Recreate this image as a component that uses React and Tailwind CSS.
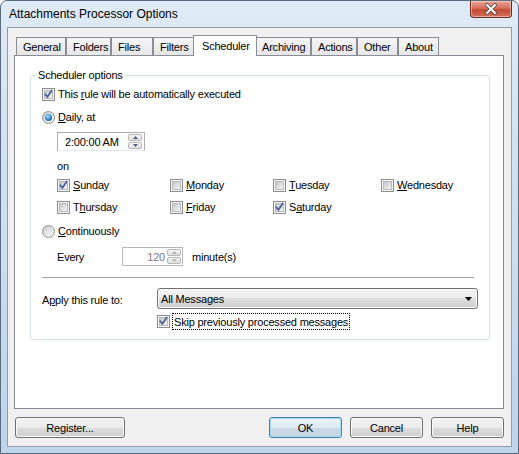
import React from 'react';

const tabs = [
  { label: 'General', w: 'w-[50px]' },
  { label: 'Folders', w: 'w-[45px]' },
  { label: 'Files', w: 'w-[42px]' },
  { label: 'Filters', w: 'w-[42px]' },
  { label: 'Scheduler', w: 'w-[64px]', active: true },
  { label: 'Archiving', w: 'w-[56px]' },
  { label: 'Actions', w: 'w-[46px]' },
  { label: 'Other', w: 'w-[41px]' },
  { label: 'About', w: 'w-[41px]' },
];

// underlined access key letter
const U = ({ children }) => <span className="underline underline-offset-[1px]">{children}</span>;

function CheckBox({ checked }) {
  return (
    <span className="relative flex h-[13px] w-[13px] shrink-0 items-center justify-center border border-[#8f8f8f] bg-[#f4f4f4]">
      <span className="h-[9px] w-[9px] border border-[#b9bbbe] bg-[linear-gradient(135deg,#c3c6ca,#dfe0e2_55%,#f4f4f4)]" />
      {checked && (
        <svg className="absolute left-[-1px] top-[-1px]" width="13" height="13" viewBox="0 0 13 13">
          <path d="M3.3 6.3 L5.4 8.8 L9.6 2.8" fill="none" stroke="#4a5f97" strokeWidth="1.7" strokeLinecap="square" />
        </svg>
      )}
    </span>
  );
}

function Radio({ checked }) {
  return (
    <span className="flex h-[13px] w-[13px] shrink-0 items-center justify-center rounded-full border border-[#8f8f8f] bg-[linear-gradient(135deg,#c4c7cb,#e6e7e8_55%,#fafafa)]">
      {checked && (
        <span className="h-[7px] w-[7px] rounded-full bg-[radial-gradient(circle_at_40%_35%,#b5e6ff,#3a92d8_45%,#0c3d78)]" />
      )}
    </span>
  );
}

function Spin({ disabled }) {
  const arrow = disabled ? '#b3b3b3' : '#4d6185';
  return (
    <span className="flex h-[15px] w-[14px] shrink-0 flex-col gap-[1px]">
      <span className="flex h-[7px] items-center justify-center rounded-[2px] border border-[#b7b7b7] bg-[linear-gradient(#f6f6f6,#dedede)]">
        <svg width="5" height="3" viewBox="0 0 5 3"><path d="M0 3 L2.5 0 L5 3Z" fill={arrow} /></svg>
      </span>
      <span className="flex h-[7px] items-center justify-center rounded-[2px] border border-[#b7b7b7] bg-[linear-gradient(#f6f6f6,#dedede)]">
        <svg width="5" height="3" viewBox="0 0 5 3"><path d="M0 0 L5 0 L2.5 3Z" fill={arrow} /></svg>
      </span>
    </span>
  );
}

function Day({ checked, children, w }) {
  return (
    <div className={`flex items-center gap-[3px] ${w}`}>
      <CheckBox checked={checked} />
      <span>{children}</span>
    </div>
  );
}

function CloseButton() {
  return (
    <div className="mr-[6px] flex h-[17px] w-[42px] items-center justify-center rounded-b-[4px] border border-t-0 border-[#6b2a20] bg-[linear-gradient(#e9a597,#d8705b_45%,#c24a31_55%,#d0735d)] shadow-[inset_0_0_0_1px_rgba(255,220,210,0.55)]">
      <svg width="14" height="12" viewBox="0 0 14 12">
        <path d="M3 2 L11 10 M11 2 L3 10" stroke="#4a4a4a" strokeWidth="3.6" strokeLinecap="round" />
        <path d="M3 2 L11 10 M11 2 L3 10" stroke="#ffffff" strokeWidth="2" strokeLinecap="round" />
      </svg>
    </div>
  );
}

const btn =
  'flex h-[21px] w-[73px] items-center justify-center rounded-[3px] border border-[#707070] bg-[linear-gradient(#f2f2f2,#ebebeb_50%,#dddddd_50%,#cfcfcf)] shadow-[inset_0_0_0_1px_#fbfbfb]';

export default function App() {
  return (
    <div className="flex h-[454px] w-[519px] flex-col overflow-hidden rounded-t-[7px] border border-[#5b6b7e] bg-[linear-gradient(180deg,#dfeaf6_0%,#d2e1f1_35%,#bed4eb_100%)] font-['Liberation_Sans',Arial,sans-serif] text-[11px] leading-[14px] tracking-[-0.2px] text-black">
      {/* title bar */}
      <div className="flex h-[26px] shrink-0 items-start justify-between">
        <span className="pl-[8px] pt-[6px] text-[12px] leading-[14px] tracking-normal">Attachments Processor Options</span>
        <CloseButton />
      </div>

      {/* client area */}
      <div className="mx-[6px] flex flex-1 flex-col border border-[#8c9db2] bg-[#f0f0f0] pt-[7px]">
        <div className="ml-[6px] w-[490px]">
          {/* tab strip */}
          <div className="flex h-[20px] items-end pl-[2px]">
            {tabs.map((t) =>
              t.active ? (
                <div
                  key={t.label}
                  className={`relative z-10 -mx-[2px] -mb-px flex h-[21px] items-center border border-b-0 border-[#898c95] bg-white pb-[1px] pl-[8px] ${t.w}`}
                >
                  {t.label}
                </div>
              ) : (
                <div
                  key={t.label}
                  className={`flex h-[18px] items-center border border-b-0 border-[#898c95] bg-[linear-gradient(#f5f5f5,#e6e6e6)] pl-[6px] pt-[1px] ${t.w}`}
                >
                  {t.label}
                </div>
              )
            )}
          </div>

          {/* tab page */}
          <div className="h-[354px] border border-[#898c95] bg-white">
            <div className="relative ml-[15px] mt-[19px] h-[265px] w-[460px] rounded-[3px] border border-[#d5dfe5] pl-[11px] pt-[8px]">
              <span className="absolute -top-[8px] left-[5px] bg-white px-[2px]">Scheduler options</span>

              <div className="flex h-[20px] items-center gap-[3px]">
                <CheckBox checked />
                <span>
                  This <U>r</U>ule will be automatically executed
                </span>
              </div>

              <div className="mt-[3px] flex h-[20px] items-center gap-[3px]">
                <Radio checked />
                <span>
                  <U>D</U>aily, at
                </span>
              </div>

              <div className="ml-[15px] mt-[5px] flex h-[19px] w-[88px] items-center border border-[#abadb3] border-b-[#e3e9ef] bg-white pl-[7px] pr-[2px]">
                <span className="flex-1">2:00:00 AM</span>
                <Spin />
              </div>

              <div className="ml-[15px] mt-[7px] flex h-[16px] items-center">on</div>

              <div className="ml-[15px] mt-[2px] flex h-[18px] items-center">
                <Day checked w="w-[113px]">
                  <U>S</U>unday
                </Day>
                <Day w="w-[103px]">
                  <U>M</U>onday
                </Day>
                <Day w="w-[108px]">
                  <U>T</U>uesday
                </Day>
                <Day w="w-[90px]">
                  <U>W</U>ednesday
                </Day>
              </div>

              <div className="ml-[15px] mt-[4px] flex h-[18px] items-center">
                <Day w="w-[113px]">
                  T<U>h</U>ursday
                </Day>
                <Day w="w-[103px]">
                  <U>F</U>riday
                </Day>
                <Day checked w="w-[108px]">
                  S<U>a</U>turday
                </Day>
              </div>

              <div className="mt-[6px] flex h-[18px] items-center gap-[3px]">
                <Radio />
                <span>
                  <U>C</U>ontinuously
                </span>
              </div>

              <div className="ml-[15px] mt-[7px] flex h-[19px] items-center">
                <span className="w-[65px]">Every</span>
                <div className="flex h-[19px] w-[61px] items-center border border-[#b5b8bd] bg-white pr-[1px]">
                  <span className="flex-1 pr-[2px] text-right text-[#7a7a7a]">120</span>
                  <Spin disabled />
                </div>
                <span className="ml-[9px]">minute(s)</span>
              </div>

              <div className="mt-[11px] h-px w-[432px] bg-[#a0a0a0]" />

              <div className="mt-[10px] flex h-[21px] items-center">
                <span className="w-[115px] pt-[3px]">
                  A<U>p</U>ply this rule to:
                </span>
                <div className="flex h-[21px] w-[321px] items-center rounded-[3px] border border-[#707070] bg-[linear-gradient(#f2f2f2,#ebebeb_50%,#dddddd_50%,#cfcfcf)] pl-[3px] pr-[5px] shadow-[inset_0_0_0_1px_#fbfbfb]">
                  <span className="flex-1">All Messages</span>
                  <svg width="7" height="4" viewBox="0 0 7 4">
                    <path d="M0 0 L7 0 L3.5 4Z" fill="#000" />
                  </svg>
                </div>
              </div>

              <div className="ml-[115px] mt-[4px] flex h-[17px] items-center gap-[2px]">
                <CheckBox checked />
                <span className="flex h-[17px] items-center border border-dotted border-black px-[1px]">
                  Skip previously processed messages
                </span>
              </div>
            </div>
          </div>

          {/* buttons */}
          <div className="mt-[8px] flex h-[21px] items-center">
            <button className={`${btn} ml-[1px] w-[110px]`}>Register...</button>
            <div className="flex-1" />
            <button className="flex h-[21px] w-[73px] items-center justify-center rounded-[3px] border border-[#3c7fb1] bg-[linear-gradient(#eaf2f8,#dde9f2_50%,#ccdbe7_50%,#c2d4e2)] shadow-[inset_0_0_0_1px_#a9dbf6]">
              OK
            </button>
            <button className={`${btn} ml-[8px]`}>Cancel</button>
            <button className={`${btn} ml-[8px]`}>Help</button>
          </div>
        </div>
      </div>
      <div className="h-[6px] shrink-0" />
    </div>
  );
}
